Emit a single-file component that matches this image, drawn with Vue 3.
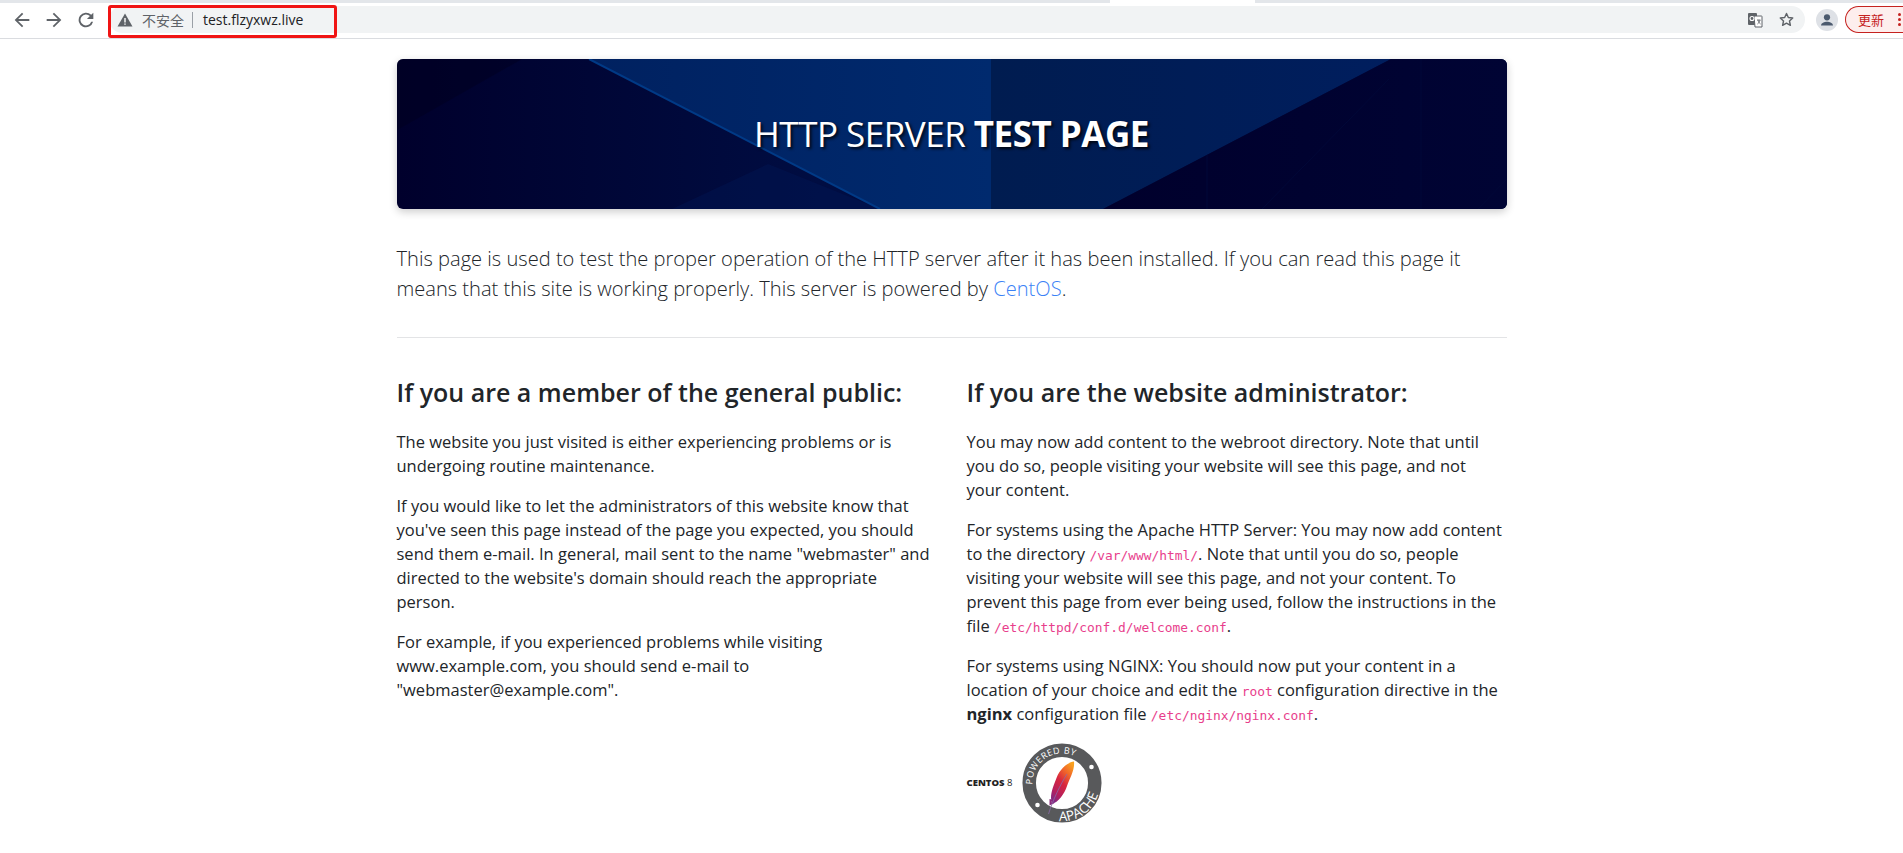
<template>
  <div class="toolbar">
    <div class="tabstrip"><span class="tab-notch"></span></div>
    <div class="toolbar-row">
      <div class="nav-buttons">
        <svg viewBox="0 0 24 24" width="22" height="22"><path d="M20 11H7.800l5.600-5.600L12 4l-8 8 8 8 1.400-1.400L7.800 13H20z" fill="#5f6368"/></svg>
        <svg viewBox="0 0 24 24" width="22" height="22"><path d="M4 11h12.200l-5.600-5.600L12 4l8 8-8 8-1.400-1.400 5.600-5.600H4z" fill="#5f6368"/></svg>
        <svg viewBox="0 0 24 24" width="22" height="22"><path d="M17.650 6.350A8 8 0 1 0 19.730 14h-2.080a6 6 0 1 1-1.410-6.240L13 11h7V4z" fill="#5f6368"/></svg>
      </div>
      <div class="omnibox">
        <svg class="warn" viewBox="0 0 16 16" width="16" height="16"><path d="M8 1.500 15.500 14.500H.5z" fill="#5f6368"/><path d="M7.300 6h1.400v4.600H7.300zM7.300 11.400h1.400v1.400H7.300z" fill="#fff"/></svg>
        <span class="not-secure">不安全</span>
        <span class="divider"></span>
        <span class="url">test.flzyxwz.live</span>
        <div class="omni-actions">
          <svg viewBox="0 0 16 16" width="16" height="16">
            <rect x="1" y="1" width="9" height="12" rx="1" fill="#5f6368"/>
            <path d="M7 4h7.500a.5.500 0 0 1 .5.500V15H8z" fill="#fff" stroke="#5f6368"/>
            <circle cx="5" cy="6.500" r="2" fill="none" stroke="#fff" stroke-width="1.100"/>
            <path d="M10 8h3.500M11 8c.4 2 1.300 3.200 2.500 4M13 8c-.4 2-1.300 3.200-2.500 4" fill="none" stroke="#5f6368" stroke-width=".9"/>
          </svg>
          <svg viewBox="0 0 24 24" width="17" height="17"><path d="M12 3.500l2.600 5.700 6.200.7-4.600 4.200 1.300 6.100L12 17.100l-5.500 3.100 1.300-6.100L3.200 9.900l6.200-.7z" fill="none" stroke="#5f6368" stroke-width="2" stroke-linejoin="round"/></svg>
        </div>
      </div>
      <div class="avatar">
        <svg viewBox="0 0 22 22" width="22" height="22"><circle cx="11" cy="11" r="11" fill="#dee1e6"/><circle cx="11" cy="8.300" r="3.100" fill="#4b5a6e"/><path d="M5 16.500c0-2.600 3.500-3.800 6-3.800s6 1.200 6 3.800z" fill="#4b5a6e"/></svg>
      </div>
      <div class="update-pill">
        <span>更新</span>
        <span class="dots"><i></i><i></i><i></i></span>
      </div>
    </div>
    <div class="highlight"></div>
  </div>

  <main class="page">
    <div class="banner">
      <svg class="banner-art" viewBox="0 0 1110 150" preserveAspectRatio="none">
        <defs>
          <linearGradient id="leftBg" x1="0" x2="1" y1="0" y2="0">
            <stop offset="0" stop-color="#00002c"/>
            <stop offset=".38" stop-color="#000d42"/>
          </linearGradient>
          <linearGradient id="midBg" x1="0" x2="1" y1="0" y2="0">
            <stop offset="0" stop-color="#002160"/>
            <stop offset="1" stop-color="#002a6e"/>
          </linearGradient>
          <linearGradient id="rightBg" x1="0" x2="1" y1="0" y2="0">
            <stop offset="0" stop-color="#001c50"/>
            <stop offset="1" stop-color="#001e5e"/>
          </linearGradient>
          <linearGradient id="farBg" x1="0" x2="1" y1="0" y2="0">
            <stop offset="0" stop-color="#00002c"/>
            <stop offset="1" stop-color="#000434"/>
          </linearGradient>
        </defs>
        <rect width="1110" height="150" fill="url(#leftBg)"/>
        <polygon points="0,0 125,0 0,71" fill="#00001c" opacity=".4"/>
        <polygon points="275,150 371,105 483,150" fill="#001a58" opacity=".35"/>
        <polygon points="192,0 594,0 594,150 483,150" fill="url(#midBg)"/>
        <polygon points="594,0 994,0 706,150 594,150" fill="url(#rightBg)"/>
        <polygon points="994,0 1110,0 1110,150 706,150" fill="url(#farBg)"/>
        <path d="M865 150 992 20M1081 150 1110 120M1024 0V150M810 96V150" fill="none" stroke="#000838" stroke-width="1"/>
        <line x1="192" y1="0" x2="483" y2="150" stroke="#003a86" stroke-width="2"/>
      </svg>
      <h1 class="banner-title">HTTP SERVER <strong>TEST PAGE</strong></h1>
    </div>

    <p class="lead">This page is used to test the proper operation of the HTTP server after it has been installed. If you can read this page it means that this site is working properly. This server is powered by <a href="#">CentOS</a>.</p>
    <hr />

    <div class="columns">
      <section class="col">
        <h2>If you are a member of the general public:</h2>
        <p>The website you just visited is either experiencing problems or is undergoing routine maintenance.</p>
        <p>If you would like to let the administrators of this website know that you've seen this page instead of the page you expected, you should send them e-mail. In general, mail sent to the name "webmaster" and directed to the website's domain should reach the appropriate person.</p>
        <p>For example, if you experienced problems while visiting www.example.com, you should send e-mail to "webmaster@example.com".</p>
      </section>
      <section class="col">
        <h2>If you are the website administrator:</h2>
        <p>You may now add content to the webroot directory. Note that until you do so, people visiting your website will see this page, and not your content.</p>
        <p>For systems using the Apache HTTP Server: You may now add content to the directory <code>/var/www/html/</code>. Note that until you do so, people visiting your website will see this page, and not your content. To prevent this page from ever being used, follow the instructions in the file <code>/etc/httpd/conf.d/welcome.conf</code>.</p>
        <p>For systems using NGINX: You should now put your content in a location of your choice and edit the <code>root</code> configuration directive in the <strong>nginx</strong> configuration file <code>/etc/nginx/nginx.conf</code>.</p>
        <div class="logos">
          <span class="centos"><b>CENTOS</b> 8</span>
          <svg class="apache" viewBox="0 0 82 82" width="82" height="82">
            <defs>
              <linearGradient id="feather" x1=".8" y1="0" x2=".2" y2="1">
                <stop offset="0" stop-color="#f9a11f"/>
                <stop offset=".25" stop-color="#f0652a"/>
                <stop offset=".5" stop-color="#d8263f"/>
                <stop offset=".8" stop-color="#b21f5f"/>
                <stop offset="1" stop-color="#7d2a86"/>
              </linearGradient>
              <path id="arcTop" d="M11.500 42.500A29.500 29.500 0 0 1 63.600 22"/>
              <path id="arcBottom" d="M38 79A38 38 0 0 0 79 41"/>
            </defs>
            <circle cx="41" cy="41" r="32.800" fill="none" stroke="#58595b" stroke-width="13.500"/>
            <circle cx="70.500" cy="25" r="2.300" fill="#fff"/>
            <circle cx="16.500" cy="63" r="2.300" fill="#fff"/>
            <text class="ring-text top"><textPath href="#arcTop">POWERED BY</textPath></text>
            <text class="ring-text bottom"><textPath href="#arcBottom">APACHE</textPath></text>
            <path d="M53 19.500C46 20.500 39 27 35.500 36 33 43 30 49 30 56L31 62C37 60.500 43.500 52 46 44 48.500 37 54 28 53 19.500z" fill="url(#feather)"/>
            <path d="M28.500 57l5 1-3.500 2 3.500 1-5 2.500z" fill="#8a2a7c"/>
            <path d="M46 32C39 43 32 58 27.500 72" fill="none" stroke="#8a6aa8" stroke-width=".8"/>
          </svg>
        </div>
      </section>
    </div>
  </main>
</template>

<script setup>
</script>

<style>
html, body {
  margin: 0;
  background: #fff;
}
</style>

<style scoped>
.toolbar {
  position: relative;
  height: 38px;
  border-bottom: 1px solid #dadce0;
  box-sizing: content-box;
  font-family: "Open Sans", "Noto Sans CJK SC", sans-serif;
  overflow: hidden;
}
.tabstrip {
  height: 3px;
  background: #e3e6ea;
  position: relative;
}
.tab-notch {
  position: absolute;
  left: 1110px;
  width: 145px;
  top: 0;
  height: 3px;
  background: #fff;
}
.toolbar-row {
  display: flex;
  align-items: center;
  padding-top: 3px;
  height: 27px;
}
.nav-buttons {
  display: flex;
  gap: 10px;
  padding-left: 11px;
  width: 109px;
  flex: none;
  box-sizing: border-box;
}
.omnibox {
  flex: 1;
  height: 27px;
  background: #f1f3f4;
  border-radius: 14px;
  display: flex;
  align-items: center;
  padding-left: 8px;
  padding-right: 10px;
}
.not-secure {
  margin-left: 9px;
  font-size: 14px;
  color: #5f6368;
  font-family: "Noto Sans CJK SC", sans-serif;
}
.divider {
  width: 1px;
  height: 16px;
  background: #9aa0a6;
  margin: 0 10px 0 8px;
}
.url {
  font-size: 14px;
  color: #202124;
}
.omni-actions {
  margin-left: auto;
  display: flex;
  align-items: center;
  gap: 15px;
}
.avatar {
  margin-left: 11px;
  flex: none;
  height: 22px;
}
.update-pill {
  flex: none;
  margin-left: 7px;
  width: 58px;
  height: 27px;
  border: 1px solid #c5221f;
  border-right: none;
  border-radius: 14px 0 0 14px;
  background: #fdeeed;
  color: #c5221f;
  font-size: 13px;
  font-family: "Noto Sans CJK SC", sans-serif;
  display: flex;
  align-items: center;
  padding-left: 12px;
  box-sizing: border-box;
}
.dots {
  display: flex;
  flex-direction: column;
  gap: 2px;
  margin-left: 14px;
}
.dots i {
  width: 3px;
  height: 3px;
  border-radius: 50%;
  background: #c5221f;
}
.highlight {
  position: absolute;
  left: 108px;
  top: 5px;
  width: 229px;
  height: 33px;
  border: 3px solid #f01414;
  border-radius: 3px;
  box-sizing: border-box;
}

.page {
  width: 1110px;
  margin: 0 auto;
  padding-top: 20px;
  font-family: "Open Sans", "Noto Sans", sans-serif;
  font-size: 16.5px;
  line-height: 24px;
  color: #212529;
}
.banner {
  position: relative;
  height: 150px;
  border-radius: 6px;
  overflow: hidden;
  box-shadow: 0 3px 8px rgba(0, 0, 0, 0.2);
  display: flex;
  align-items: center;
  justify-content: center;
}
.banner-art {
  position: absolute;
  inset: 0;
  width: 100%;
  height: 100%;
}
.banner-title {
  position: relative;
  margin: 0;
  font-size: 35px;
  font-weight: 400;
  color: #fff;
  letter-spacing: -0.5px;
  text-shadow: 2px 2px 3px rgba(0, 0, 0, 0.8);
}
.banner-title strong {
  font-weight: 700;
}
.lead {
  margin: 35px 0 0;
  font-size: 20.1px;
  font-weight: 300;
  line-height: 30px;
}
.lead a {
  color: #3b82f6;
  text-decoration: none;
}
hr {
  margin: 33px 0 0;
  border: 0;
  border-top: 1px solid #e3e4e6;
}
.columns {
  display: flex;
  gap: 30px;
  margin-top: 40px;
}
.col {
  flex: 1;
  min-width: 0;
  padding-right: 3px;
}
h2 {
  margin: 0 0 23px;
  font-size: 25px;
  line-height: 29px;
  font-weight: 600;
  white-space: nowrap;
}
p {
  margin: 0 0 16px;
}
code {
  font-family: "DejaVu Sans Mono", monospace;
  font-size: 12.9px;
  line-height: 1;
  color: #e83e8c;
}
.col strong {
  font-weight: 700;
}
.logos {
  display: flex;
  align-items: center;
  gap: 9px;
  margin-top: 12px;
}
.centos {
  font-size: 9.5px;
  line-height: 12px;
  color: #222;
}
.centos b {
  font-weight: 800;
}
.ring-text {
  fill: #fff;
  font-family: "Open Sans", sans-serif;
}
.ring-text.top {
  font-size: 9px;
  letter-spacing: 0.5px;
}
.ring-text.bottom {
  font-size: 13.5px;
}
</style>
